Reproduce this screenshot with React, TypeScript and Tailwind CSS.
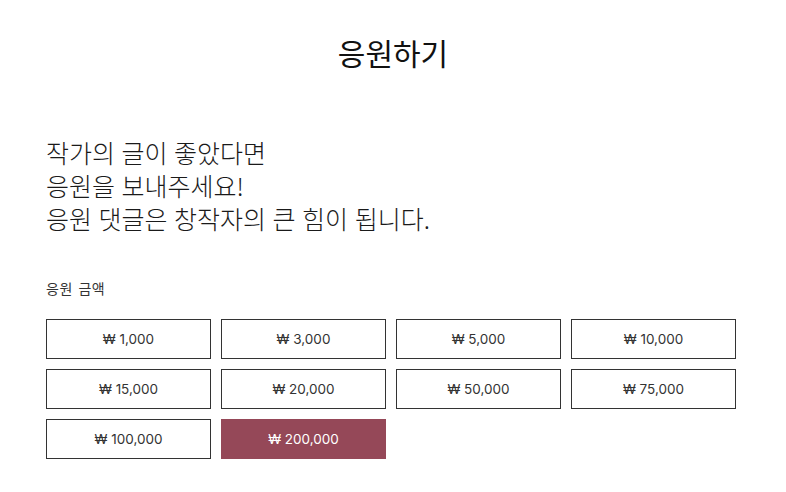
import React, { useState } from 'react';

const amounts = [1000, 3000, 5000, 10000, 15000, 20000, 50000, 75000, 100000, 200000];

function App() {
  const [selected, setSelected] = useState<number>(200000);

  return (
    <div className="min-h-screen bg-white text-[#111] font-['Noto_Sans_CJK_KR',sans-serif]">
      <h1 className="pt-[30px] text-center text-[30px] leading-[44px] font-normal">응원하기</h1>

      <div className="px-[46px] pt-[62px]">
        <p className="text-[25px] leading-[33px] text-[#1a1a1a] font-light [word-spacing:1px]">
          작가의 글이 좋았다면
          <br />
          응원을 보내주세요!
          <br />
          응원 댓글은 창작자의 큰 힘이 됩니다.
        </p>

        <div className="mt-[43px] text-[14px] leading-[20px] text-[#333] tracking-[0.5px] [word-spacing:2px]">응원 금액</div>

        <div className="mt-[21px] grid w-[690px] grid-cols-4 gap-[10px] font-['Inter','Noto_Sans_CJK_KR',sans-serif]">
          {amounts.map((a) => {
            const on = a === selected;
            return (
              <button
                key={a}
                type="button"
                onClick={() => setSelected(a)}
                className={
                  on
                    ? 'h-[40px] bg-[#954858] text-white text-[13.5px] border border-[#954858]'
                    : 'h-[40px] bg-white text-[#333] text-[13.5px] border border-[#333]'
                }
              >
                ₩ {a.toLocaleString('en-US')}
              </button>
            );
          })}
        </div>
      </div>
    </div>
  );
}

export default App;
